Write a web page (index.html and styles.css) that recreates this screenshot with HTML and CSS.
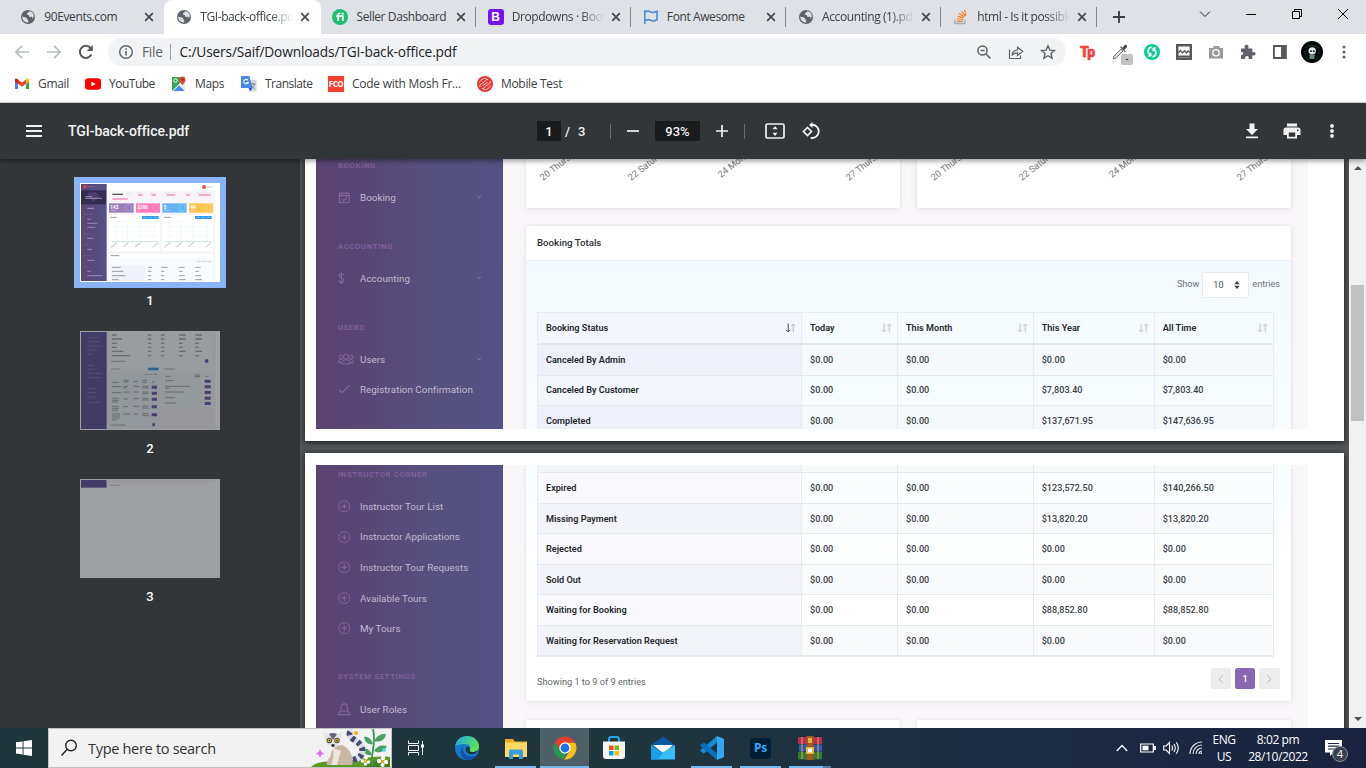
FILE: index.html
```html
<!DOCTYPE html>
<html lang="en">
<head>
<meta charset="utf-8">
<title>TGI-back-office.pdf</title>
<link rel="stylesheet" href="styles.css">
</head>
<body>
<svg class="defs" aria-hidden="true">
  <symbol id="globe" viewBox="0 0 16 16"><circle cx="8" cy="8" r="7" fill="#5f6368"/><path d="M2.200 7.600c1.800.9 3 .5 4.200 1.100.9.5.3 1.500 1.300 2 .8.4.6 1.500.4 2.700-3.300.3-6-2.300-5.900-5.800zM9.300 2.300c-.3 1.500-2.300 1.300-2.400 2.600 0 .9 1.300.6 1.900 1.300.6.8.2 1.700 1.200 1.800 1 .1 1.500-.5 2.300.1.6.5.3 1.300 0 2 1.500-1.300 1.900-3.500 1-5.300-.8-1.400-2.200-2.400-4-2.500z" fill="#dee1e6"/></symbol>
  <symbol id="x" viewBox="0 0 10 10"><path d="M1.200 1.200l7.600 7.600M8.800 1.200L1.200 8.800" stroke="#45494d" stroke-width="1.700"/></symbol>
  <symbol id="plus" viewBox="0 0 14 14"><circle cx="7" cy="7" r="6.200" fill="none" stroke="#8765a5" stroke-width="1.100"/><path d="M7 3.700v6.600M3.700 7h6.600" stroke="#8765a5" stroke-width="1.200"/></symbol>
  <symbol id="chev" viewBox="0 0 6 4"><path d="M.8.8L3 2.800 5.200.8" fill="none" stroke="#8a73ab"/></symbol>
  <symbol id="sort" viewBox="0 0 12 10"><path d="M3.200.5v8.500M1 6.800l2.200 2.200 2.200-2.200M8.200 9.500V1M6 3.200L8.200 1l2.200 2.200" fill="none" stroke="#c3c6ca" stroke-width="1"/></symbol>
</svg>

<header class="tabs">
  <div class="tab"><svg class="fav"><use href="#globe"/></svg><span class="title">90Events.com</span><svg class="close"><use href="#x"/></svg></div>
  <div class="tab active"><svg class="fav"><use href="#globe"/></svg><span class="title fade">TGI-back-office.pdf</span><svg class="close"><use href="#x"/></svg></div>
  <div class="tab sep"><svg class="fav" viewBox="0 0 16 16"><circle cx="8" cy="8" r="8" fill="#1dbf73"/><path d="M6.200 12V6.200c0-1.200.5-1.800 1.700-1.800h.6M4.300 7.200h6.500V12" fill="none" stroke="#fff" stroke-width="1.800"/><circle cx="10.700" cy="4.700" r="1.100" fill="#fff"/></svg><span class="title">Seller Dashboard</span><svg class="close"><use href="#x"/></svg></div>
  <div class="tab sep"><span class="fav boot">B</span><span class="title fade">Dropdowns · Bootstrap</span><svg class="close"><use href="#x"/></svg></div>
  <div class="tab sep"><svg class="fav" viewBox="0 0 16 16"><path d="M1.800 1v14M1.800 3c3-1.500 4.200-1.200 6 0 2 1 3.500.8 6.200-.7v8.500c-2.700 1.500-4.200 1.600-6.200.5-1.800-1-3-1.200-6 .4" fill="none" stroke="#538dd7" stroke-width="1.600"/></svg><span class="title">Font Awesome</span><svg class="close"><use href="#x"/></svg></div>
  <div class="tab sep"><svg class="fav"><use href="#globe"/></svg><span class="title fade">Accounting (1).pdf</span><svg class="close"><use href="#x"/></svg></div>
  <div class="tab sep"><svg class="fav" viewBox="0 0 16 16"><path d="M2 10.500v4h10v-4" fill="none" stroke="#a9abae" stroke-width="1.300"/><path d="M4 12.300h6M4 9.800l6.200.7M4.600 7.200l6 1.700M6 4.500l5.300 3.200M8.400 2.300l3.800 4.800M11.500.8l1.500 5.800" stroke="#f48024" stroke-width="1.200"/></svg><span class="title fade">html - Is it possible</span><svg class="close"><use href="#x"/></svg></div>
  <svg class="newtab" viewBox="0 0 12 12"><path d="M6 0v12M0 6h12" stroke="#3c4043" stroke-width="1.900"/></svg>
  <div class="winctl">
    <svg viewBox="0 0 12 12"><path d="M1 3.500l5 5 5-5" fill="none" stroke="#222"/></svg>
    <svg viewBox="0 0 12 12"><path d="M1 6.500h10" stroke="#000"/></svg>
    <svg viewBox="0 0 12 12"><path d="M1.500 3.500h7v7h-7zM3.500 3.500v-2h7v7h-2" fill="none" stroke="#000"/></svg>
    <svg viewBox="0 0 12 12"><path d="M1 1l10 10M11 1L1 11" stroke="#000"/></svg>
  </div>
</header>

<div class="navbar">
  <div class="navbtns">
    <svg viewBox="0 0 16 16"><path d="M15 8H2M8 1.800L1.800 8 8 14.200" fill="none" stroke="#babcbe" stroke-width="1.700"/></svg>
    <svg viewBox="0 0 16 16"><path d="M1 8h13M8 1.800L14.200 8 8 14.200" fill="none" stroke="#babcbe" stroke-width="1.700"/></svg>
    <svg viewBox="0 0 16 16"><path d="M13.300 10.500A6 6 0 1 1 12.500 4" fill="none" stroke="#55595d" stroke-width="2"/><path d="M14.800 1v6h-6z" fill="#55595d"/></svg>
  </div>
  <div class="omni">
    <svg viewBox="0 0 16 16"><circle cx="8" cy="8" r="6.300" fill="none" stroke="#5f6368" stroke-width="1.400"/><path d="M8 7v4.500M8 4.200v1.600" stroke="#5f6368" stroke-width="1.600"/></svg>
    <span class="scheme">File</span><span class="url">C:/Users/Saif/Downloads/TGI-back-office.pdf</span>
    <div class="omniright">
      <svg viewBox="0 0 16 16"><circle cx="6.500" cy="6.500" r="4.600" fill="none" stroke="#5f6368" stroke-width="1.500"/><path d="M10 10l4.500 4.500M4.500 6.500h4" stroke="#5f6368" stroke-width="1.500"/></svg>
      <svg viewBox="0 0 16 16"><path d="M1.500 5.500v9h11v-3M4 11.500c.3-3.600 2.300-5.300 5.500-5.500V3.200l5.300 4.100-5.300 4.200V8.800C7 8.700 5.300 9.500 4 11.500z" fill="none" stroke="#5f6368" stroke-width="1.200"/></svg>
      <svg viewBox="0 0 16 16"><path d="M8 1.800l1.900 4.300 4.600.4-3.500 3.100 1.100 4.600L8 11.700l-4.100 2.500L5 9.600 1.500 6.500l4.600-.4z" fill="none" stroke="#5f6368" stroke-width="1.400"/></svg>
    </div>
  </div>
  <div class="exts">
    <span class="tp">Tp</span>
    <span class="picker"><svg viewBox="0 0 16 16"><path d="M1 15l1-3 7-7 2 2-7 7z" fill="#ddd" stroke="#777"/><path d="M8 3l5 5 .8-.8-1.500-1.500L15 3.200C15.500 1.500 14.500.5 12.800 1L10.300 3.700 8.800 2.200z" fill="#4b4b4b"/></svg><b>-</b></span>
    <svg viewBox="0 0 16 16"><circle cx="8" cy="8" r="8" fill="#0bcb97"/><path d="M7.500 3.200C4.500 4 3.300 6.500 4.600 9l1.400 1.500M8.500 12.800c3-.8 4.200-3.300 2.900-5.800L10 5.500" fill="none" stroke="#fff" stroke-width="1.800"/><path d="M7.500 8.300v4.200H3.300zM8.500 7.700V3.500h4.200z" fill="#fff"/></svg>
    <svg viewBox="0 0 16 16"><path d="M1.200 1.200h13.600v13.600H1.200z" fill="#fff" stroke="#55585c" stroke-width="2.400"/><path d="M2 9l2.500-2.500L6.500 9l2-2.500L10.500 9l1.500-2 2 1.500" fill="none" stroke="#55585c" stroke-width="1.300"/><path d="M2 12.500h12" stroke="#55585c" stroke-width="2"/></svg>
    <svg viewBox="0 0 16 16"><path d="M1 4h4l1-2h5l1 2h3v10.500H1z" fill="#9a9a9a"/><circle cx="8" cy="8.800" r="3.200" fill="#999" stroke="#fff" stroke-width="1.300"/></svg>
    <svg viewBox="0 0 16 16"><path d="M1 4.500h4C4 1.500 5 .7 6.500.7S9 1.500 8.300 4.500h4v3.800c2.500-.7 3.300.2 3.300 1.500s-1 2.200-3.300 1.500V15H8.700c.5-2-.5-3-1.700-3s-2.300 1-1.700 3H1v-4c3 .6 3.200-3.500 0-3z" fill="#5f6368"/></svg>
    <svg viewBox="0 0 16 16"><path d="M1.900 2h12v12h-12z" fill="#fff" stroke="#55595d" stroke-width="1.900"/><path d="M9 2h5v12H9z" fill="#55595d"/></svg>
    <svg class="avatar" viewBox="0 0 22 22"><circle cx="11" cy="11" r="11" fill="#050708"/><path d="M4 7q7-5 14 0" fill="none" stroke="#38666f" stroke-dasharray="1 1"/><path d="M4 10v4M18 10v4M5 16l3 2M17 16l-3 2" stroke="#31545c" stroke-dasharray="1 1"/><ellipse cx="11.200" cy="9.800" rx="3.700" ry="3.500" fill="#e6e9e9"/><path d="M8 14q3-2 6 0l-1 4H9z" fill="#6c8087"/><circle cx="10" cy="10.200" r=".9"/><circle cx="12.800" cy="10.200" r=".9"/></svg>
    <svg viewBox="0 0 16 16"><g fill="#5f6368"><circle cx="8" cy="3" r="1.500"/><circle cx="8" cy="8" r="1.500"/><circle cx="8" cy="13" r="1.500"/></g></svg>
  </div>
</div>

<nav class="bookmarks">
  <a class="bk w1"><svg viewBox="0 0 16 16"><path d="M1 4v9h3V7z" fill="#4285f4"/><path d="M12 7v6h3V4z" fill="#34a853"/><path d="M12 3.500V8l3-2.200V3.500C15 2 13 2 12 3.500z" fill="#fbbc04"/><path d="M4 3.500v4.300l4 3 4-3V3.500L8 6.500z" fill="#ea4335"/><path d="M1 3.500v2.300L4 8V3.500C3 2 1 2 1 3.500z" fill="#c5221f"/></svg><span>Gmail</span></a>
  <a class="bk w2"><svg viewBox="0 0 16 16"><rect y="2.300" width="16" height="11.400" rx="3" fill="#f00"/><path d="M6.400 5.500v5l4.200-2.500z" fill="#fff"/></svg><span>YouTube</span></a>
  <a class="bk w3"><svg viewBox="0 0 16 16"><path d="M1 1h13v14H1z" fill="#34a853"/><path d="M1 15L13 3l1 1v11z" fill="#e8eaed"/><path d="M2.500 15L8 9.500l5.500 5.500z" fill="#4285f4"/><circle cx="4.500" cy="4.500" r="1.700" fill="none" stroke="#fff"/><path d="M11.500 9.500C10 7 8.500 6 8.500 3.500a3 3 0 0 1 6 0c0 2.500-1.500 3.500-3 6z" fill="#ea4335"/><circle cx="11.500" cy="3.500" r="1.100" fill="#8b211b"/></svg><span>Maps</span></a>
  <a class="bk w4"><svg viewBox="0 0 16 16"><path d="M6 4h9.500v11.500H9z" fill="#d4d7da"/><path d="M9.500 8h5M12 6.800V8M10 12.500c2-1 3-2.500 3.200-4.500M10.500 9.500c.7 1.500 1.800 2.500 3.200 3.200" fill="none" stroke="#7e8a92"/><path d="M0 0h8.500l3 12H0z" fill="#4a86ed"/><path d="M7 4.300A2.300 2.300 0 1 0 7.300 6.500H5" fill="none" stroke="#fff" stroke-width="1.100"/><path d="M7.500 12h4L9 15.500z" fill="#2d5fca"/></svg><span>Translate</span></a>
  <a class="bk w5"><b class="fco">FCO</b><span>Code with Mosh Fr...</span></a>
  <a class="bk"><svg viewBox="0 0 16 16"><circle cx="8" cy="8" r="8" fill="#e23a36"/><path d="M2.500 6.500C4 3 7 2 9.500 2.500M3 11c-1-4 4-3.500 5-6 .5-1 1.500-1.500 3-1.500M13.500 9.500C12 13 9 14 6.500 13.500M13 5c1 4-4 3.500-5 6-.5 1-1.500 1.500-3 1.500M5.500 9.500l5-3" fill="none" stroke="#ffd9d5" stroke-width="1"/></svg><span>Mobile Test</span></a>
</nav>

<div class="pdfbar">
  <svg class="burger" viewBox="0 0 16 12"><path d="M0 1h16M0 6h16M0 11h16" stroke="#f1f1f1" stroke-width="2"/></svg>
  <span class="docname">TGI-back-office.pdf</span>
  <div class="pdfmid">
    <span class="pageno">1</span><span class="slash">/</span><span class="total">3</span>
    <i class="vsep"></i>
    <svg class="op minus" viewBox="0 0 12 12"><path d="M0 6h12" stroke="#f1f1f1" stroke-width="1.700"/></svg>
    <span class="zoomval">93%</span>
    <svg class="op" viewBox="0 0 12 12"><path d="M0 6h12M6 0v12" stroke="#f1f1f1" stroke-width="1.700"/></svg>
    <i class="vsep s2"></i>
    <svg class="fit" viewBox="0 0 20 16"><rect x="1" y="1" width="18" height="14" rx="1.500" fill="none" stroke="#f1f1f1" stroke-width="1.700"/><path d="M10 3l2.500 3.200h-5zM10 13l2.500-3.200h-5z" fill="#f1f1f1"/></svg>
    <svg class="rot" viewBox="0 0 18 18"><path d="M9.500 2.800a6.600 6.600 0 1 1-.8 13" fill="none" stroke="#f1f1f1" stroke-width="1.800"/><path d="M10.500 0v6L7 3z" fill="#f1f1f1"/><path d="M5.500 5.500l4 4-4 4-4-4z" fill="none" stroke="#f1f1f1" stroke-width="1.700"/></svg>
  </div>
  <div class="pdfright">
    <svg viewBox="0 0 18 18"><path d="M6.500 1.500h5V7H15l-6 6-6-6h3.500zM3 14.500h12v1.800H3z" fill="#f1f1f1"/></svg>
    <svg viewBox="0 0 18 18"><path d="M4 1.500h10v3H4zM3 5.500h12q2.500 0 2.500 2.500v5H14v3.500H4V13H.5V8Q.5 5.500 3 5.500zM5.800 10.500v4.200h6.400v-4.200zM14 7.500v1.500h1.500V7.500z" fill="#f1f1f1" fill-rule="evenodd"/></svg>
    <svg viewBox="0 0 18 18"><g fill="#f1f1f1"><circle cx="9" cy="4" r="1.900"/><circle cx="9" cy="9" r="1.900"/><circle cx="9" cy="14" r="1.900"/></g></svg>
  </div>
</div>

<main class="viewer">
  <aside class="thumbs">
    <div class="thumb current">
      <svg viewBox="0 0 420 297"><defs><linearGradient id="side"><stop stop-color="#5b4575"/><stop offset="1" stop-color="#545187"/></linearGradient></defs>
        <path d="M0 0h420v297H0z" fill="#fff"/><path d="M80 22h326v272H80z" fill="#f8f5f9"/><path d="M3 3h77v291H3z" fill="url(#side)"/><path d="M3 22h75v42H3z" fill="#332b52"/><path d="M20 32l26-6 14 14-20 16z" fill="#4c3d70"/>
        <circle cx="15" cy="11" r="5" fill="#e2474d"/><path d="M23 11h20" stroke="#7d6c99" stroke-width="3"/><circle cx="372" cy="12" r="6" fill="#e94f44"/><path d="M380 12h18" stroke="#ccc" stroke-width="3"/>
        <g class="ink"><path d="M16 41h20M16 46h50M22 76h20" stroke="#c3bbd2" stroke-width="3"/><g stroke="#b1a6c9" stroke-width="3"><path d="M22 109h10M22 121h30M22 133h24M22 166h18M22 199h14M22 232h22M22 265h10M22 278h46"/></g>
        <g stroke="#8767a2" stroke-width="2"><path d="M12 94h28M12 152h20M12 185h17M12 218h22M12 252h12"/></g></g>
        <path d="M97 34h32" stroke="#555" stroke-width="4"/><g class="ink" stroke="#f06cab" stroke-width="4"><path d="M97 48h46M174 36h14M214 36h14M260 36h26M318 36h12M356 36h36"/></g><path d="M140 31h16M170 30h20M210 30h20M252 30h40M312 30h24M352 30h42" stroke="#e2e0e4" stroke-width="2"/>
        <path d="M87 61h74v28H87z" fill="#9a7dbb"/><path d="M168 61h72v28h-72z" fill="#ff78b7"/><path d="M247 61h73v28h-73z" fill="#64b5f6"/><path d="M327 61h72v28h-72z" fill="#ffc552"/>
        <g class="nums"><text x="91" y="77">143</text><text x="172" y="77">$290</text><text x="251" y="77">5</text><text x="331" y="77">49</text></g>
        <path d="M93 82h14M173 82h12M252 82h20M332 82h12" stroke="#fff" stroke-opacity=".5" stroke-width="2"/><g fill="none" stroke="#fff" stroke-opacity=".2" stroke-width="3"><circle cx="146" cy="74" r="10"/><circle cx="228" cy="74" r="10"/><circle cx="306" cy="74" r="10"/><circle cx="386" cy="74" r="10"/></g>
        <path d="M87 96h153v108H87zM247 96h152v108H247zM87 213h312v81H87z" fill="#fff"/><path d="M91 103h19M252 103h20M92 218h26" stroke="#999" stroke-width="3"/><path d="M186 99h50v9h-50zM345 99h50v9h-50z" fill="#2f9cf4"/><path d="M191 103.500h40M350 103.500h40" stroke="#8cc8fa" stroke-width="2" stroke-dasharray="9 7"/>
        <g fill="none" stroke="#e0e9e9"><path d="M96 115h136M96 130h136M96 145h136M96 160h136M109 115v60M143 115v60M180 115v60M222 115v60M255 115h136M255 130h136M255 145h136M255 160h136M269 115v60M303 115v60M339 115v60M382 115v60"/></g>
        <path d="M96 176h138M255 176h138" stroke="#cbe4dc" stroke-width="3"/><g stroke="#b9bdbc" stroke-width="3"><path d="M93 193l18-14M129 192l16-13M165 191l16-12M218 193l16-14M253 193l18-14M289 192l16-13M325 191l16-12M377 193l16-14"/></g>
        <path d="M87 225h312v69H87z" fill="#f5fbfe"/><path d="M91 248h106v46H91z" fill="#f0f3fb"/><path d="M352 235h44" stroke="#b5babd" stroke-width="2" stroke-dasharray="11 4"/>
        <g class="ink" stroke="#777" stroke-width="3"><path d="M96 253h26M204 253h12M243 253h20M297 253h17M346 253h16M96 265h34M204 265h10M243 265h10M297 265h11M346 265h11M96 278h40M204 278h10M243 278h10M297 278h17M346 278h17M96 290h20M204 290h10M243 290h10M297 290h20M346 290h20"/></g>
      </svg>
    </div>
    <span class="tn">1</span>
    <div class="thumb dim">
      <svg viewBox="0 0 420 297"><path d="M0 0h420v297H0z" fill="#fff"/><path d="M80 3h326v291H80z" fill="#f3f0f7"/><path d="M3 3h77v291H3z" fill="#52418f"/><path d="M87 3h312v127H87z" fill="#f7fbfc"/>
        <g class="ink" stroke="#8b7db5" stroke-width="3"><path d="M22 20h34M22 32h38M22 45h42M22 57h28M22 70h18M22 103h20M22 115h22M22 127h42M22 140h38M22 173h24M22 185h26M22 198h28M22 214h40"/></g>
        <g class="ink" stroke="#777" stroke-width="4"><path d="M96 12h14M204 12h10M243 12h10M297 12h20M346 12h20M96 24h30M204 24h10M243 24h10M297 24h20M346 24h20M96 37h15M204 37h10M243 37h10M297 37h11M346 37h11M96 49h14M204 49h10M243 49h10M297 49h11M346 49h11M96 61h34M204 61h10M243 61h10M297 61h20M346 61h20M96 74h54M204 74h10M243 74h10M297 74h11M346 74h11"/></g><path class="ink" d="M93 91h43M93 114h26M252 114h32" stroke="#888" stroke-width="3"/><rect x="375" y="85" width="10" height="10" fill="#6c3fa5"/>
        <path d="M87 121h153v170H87z" fill="#eaf3f6"/><path d="M247 121h152v112H247z" fill="#f1f6f9"/><path d="M204 110h32v8h-32z" fill="#238fe0"/>
        <g class="ink" stroke="#777" stroke-width="3"><path d="M194 130h42" stroke-dasharray="10 4"/><path d="M96 154h20M130 148h16M130 153h16M160 151h14M187 148h14M187 154h14M216 153h8M96 167h28M130 166h14M130 171h10M160 166h18M187 166h20M187 171h18M96 185h28M130 183h20M160 183h16M187 183h18M187 188h18M96 202h20M96 208h20M96 213h18M130 204h14M160 203h16M187 202h18M187 207h20M96 226h20M96 232h20M96 238h18M130 227h14M160 226h18M187 225h18M187 231h20M96 249h24M96 255h24M96 261h22M96 267h14M130 249h20M160 249h14M187 248h18M187 254h20M92 282h44"/><path d="M255 136h18M344 132h16M344 137h16M376 136h10M255 149h26M255 166h75M255 172h14M255 183h56M255 200h30M255 216h32"/></g>
        <g fill="#6a409f"><path d="M215 164h16v9h-16zM215 182h16v9h-16zM215 200h16v9h-16zM215 223h16v9h-16zM215 247h16v9h-16zM217 277h8v9h-8zM374 146h18v9h-18zM374 163h18v9h-18zM374 180h18v9h-18zM374 197h18v9h-18zM374 213h18v9h-18z"/></g>
      </svg>
    </div>
    <span class="tn">2</span>
    <div class="thumb dim"><svg viewBox="0 0 420 297"><path d="M0 0h420v297H0z" fill="#fff"/><path d="M3 3h77v23H3z" fill="#52418f"/><path d="M80 3h326v8H80z" fill="#f8f5f9"/><path d="M88 19h30" stroke="#bbb" stroke-width="3"/></svg></div>
    <span class="tn">3</span>
  </aside>

  <section class="pages">
    <article class="page p1">
      <div class="sheet">
        <div class="menu">
          <h6>BOOKING</h6>
          <a><svg viewBox="0 0 14 14"><path d="M1.500 2.500h11v10.500h-11zM1.500 5.200h11M4 1v2.500M10 1v2.500M4.500 9l1.800 1.800L10 7.500" fill="none" stroke="#8765a5" stroke-width="1.200"/></svg>Booking<svg class="chev"><use href="#chev"/></svg></a>
          <h6>ACCOUNTING</h6>
          <a><svg viewBox="0 0 14 14"><path d="M6.300 4C6.300 2.500 5.200 2 3.700 2S1.200 2.800 1.200 4.300c0 3.200 5.300 1.800 5.300 5C6.500 11 5.200 11.800 3.800 11.800 2 11.800 1 11 1 9.400M3.800.5v13" fill="none" stroke="#8765a5" stroke-width="1.200"/></svg>Accounting<svg class="chev"><use href="#chev"/></svg></a>
          <h6>USERS</h6>
          <a><svg class="wide" viewBox="0 0 16 12"><g fill="none" stroke="#8765a5"><circle cx="8" cy="3.800" r="2.500"/><circle cx="3.500" cy="4" r="2"/><circle cx="12.500" cy="4" r="2"/><path d="M3.800 10.800c0-3 1.500-4 4.200-4s4.200 1 4.200 4zM3.800 9.500H.6c0-2.300.8-3 3.500-3.200M12.200 9.500h3.200c0-2.300-.8-3-3.500-3.200"/></g></svg>Users<svg class="chev"><use href="#chev"/></svg></a>
          <a><svg viewBox="0 0 14 14"><path d="M1 7.500l3.500 3.300L13 2.500" fill="none" stroke="#8765a5" stroke-width="1.200"/></svg>Registration Confirmation</a>
        </div>
        <div class="board">
          <div class="charts">
            <div class="card chart"><svg viewBox="0 0 374 50"><text transform="translate(17 22) rotate(-38)">20 Thursday</text><text transform="translate(105 22) rotate(-38)">22 Saturday</text><text transform="translate(195 19) rotate(-38)">24 Monday</text><text transform="translate(323 22) rotate(-38)">27 Thursday</text></svg></div>
            <div class="card chart"><svg viewBox="0 0 374 50"><text transform="translate(17 22) rotate(-38)">20 Thursday</text><text transform="translate(105 22) rotate(-38)">22 Saturday</text><text transform="translate(195 19) rotate(-38)">24 Monday</text><text transform="translate(323 22) rotate(-38)">27 Thursday</text></svg></div>
          </div>
          <div class="card totals">
            <h5>Booking Totals</h5>
            <div class="cbody">
              <div class="show"><span>Show</span><span class="select">10<svg viewBox="0 0 6 8"><path d="M3 0l2.800 3.300H.2zM3 8L.2 4.700h5.600z" fill="#3d4348"/></svg></span><span>entries</span></div>
              <div class="table">
                <div class="row head"><b>Booking Status<svg class="on" viewBox="0 0 12 10"><path d="M3.200.5v8.500M1 6.800l2.200 2.200 2.200-2.200" fill="none" stroke="#454a55"/><path d="M8.200 9.500V1M6 3.200L8.200 1l2.200 2.200" fill="none" stroke="#b9bcc5"/></svg></b><b>Today<svg><use href="#sort"/></svg></b><b>This Month<svg><use href="#sort"/></svg></b><b>This Year<svg><use href="#sort"/></svg></b><b>All Time<svg><use href="#sort"/></svg></b></div>
                <div class="row odd"><b>Canceled By Admin</b><span>$0.00</span><span>$0.00</span><span>$0.00</span><span>$0.00</span></div>
                <div class="row"><b>Canceled By Customer</b><span>$0.00</span><span>$0.00</span><span>$7,803.40</span><span>$7,803.40</span></div>
                <div class="row odd"><b>Completed</b><span>$0.00</span><span>$0.00</span><span>$137,671.95</span><span>$147,636.95</span></div>
              </div>
            </div>
          </div>
        </div>
      </div>
    </article>

    <article class="page p2">
      <div class="sheet">
        <div class="menu">
          <h6>INSTRUCTOR CORNER</h6>
          <a><svg><use href="#plus"/></svg>Instructor Tour List</a>
          <a><svg><use href="#plus"/></svg>Instructor Applications</a>
          <a><svg><use href="#plus"/></svg>Instructor Tour Requests</a>
          <a><svg><use href="#plus"/></svg>Available Tours</a>
          <a><svg><use href="#plus"/></svg>My Tours</a>
          <h6>SYSTEM SETTINGS</h6>
          <a><svg viewBox="0 0 14 14"><path d="M4.500 8.500C2 6.500 3 1 7 1s5 5.500 2.500 7.500C12 9 13 10 13.300 13H.7C1 10 2 9 4.500 8.500zM4.500 8.500q2.500 1.800 5 0" fill="none" stroke="#8765a5" stroke-width="1.200"/></svg>User Roles</a>
        </div>
        <div class="board">
          <div class="card totals">
            <div class="table">
              <div class="row odd stub"><b></b><span></span><span></span><span></span><span></span></div>
              <div class="row"><b>Expired</b><span>$0.00</span><span>$0.00</span><span>$123,572.50</span><span>$140,266.50</span></div>
              <div class="row odd"><b>Missing Payment</b><span>$0.00</span><span>$0.00</span><span>$13,820.20</span><span>$13,820.20</span></div>
              <div class="row"><b>Rejected</b><span>$0.00</span><span>$0.00</span><span>$0.00</span><span>$0.00</span></div>
              <div class="row odd"><b>Sold Out</b><span>$0.00</span><span>$0.00</span><span>$0.00</span><span>$0.00</span></div>
              <div class="row"><b>Waiting for Booking</b><span>$0.00</span><span>$0.00</span><span>$88,852.80</span><span>$88,852.80</span></div>
              <div class="row odd"><b>Waiting for Reservation Request</b><span>$0.00</span><span>$0.00</span><span>$0.00</span><span>$0.00</span></div>
            </div>
            <div class="foot"><span>Showing 1 to 9 of 9 entries</span><div class="pager"><i><svg viewBox="0 0 6 10"><path d="M5 1L1 5l4 4" fill="none" stroke="#bcbcbc"/></svg></i><i class="sel">1</i><i><svg viewBox="0 0 6 10"><path d="M1 1l4 4-4 4" fill="none" stroke="#bcbcbc"/></svg></i></div></div>
          </div>
          <div class="charts next"><div class="card"></div><div class="card"></div></div>
        </div>
      </div>
    </article>
  </section>

  <div class="scroll"><svg viewBox="0 0 8 4"><path d="M4 0l4 4H0z" fill="#505050"/></svg><i></i><svg class="dn" viewBox="0 0 8 4"><path d="M4 4l4-4H0z" fill="#505050"/></svg></div>
</main>

<footer class="taskbar">
  <div class="start"><svg viewBox="0 0 16 16"><path d="M0 2.300l6.600-.9v6H0zM7.500 1.200L16 0v7.400H7.500zM0 8.400h6.600v6.100L0 13.600zM7.500 8.400H16V16l-8.500-1.200z" fill="#fff"/></svg></div>
  <div class="search">
    <svg class="mag" viewBox="0 0 18 18"><circle cx="11" cy="6.500" r="5.300" fill="none" stroke="#222" stroke-width="1.400"/><path d="M7 10.500L1.500 16.500" stroke="#222" stroke-width="1.400"/></svg>
    <span>Type here to search</span>
    <svg class="lemur" viewBox="0 0 80 38"><path d="M0 38c5-6 20-6 32-6 18-1 28-6 47-4v10z" fill="#5d9a25"/><path d="M53 38c5-6 15-7 26-7v7z" fill="#43801c"/>
      <path d="M62 37C58 25 66 18 62 0" fill="none" stroke="#3c9555" stroke-width="1.800"/><path d="M63 12c4-7 8-7 12-7-1 6-6 9-12 7zM62 15c-2-6-6-8-9-7 1 5 4 8 9 7zM63 22c4-6 8-6 13-5-3 6-8 8-13 5zM61 26c-2-6-6-7-9-6 1 5 4 7 9 6z" fill="#48a162"/>
      <path d="M42 31C57 27 52 15 42 10 37 7 38 3 41 1" fill="none" stroke="#dcdce5" stroke-width="6"/><path d="M42 31C57 27 52 15 42 10 37 7 38 3 41 1" fill="none" stroke="#424b72" stroke-width="6" stroke-dasharray="3.500 3.500"/>
      <path d="M16 36c-1-5 3-6 4-11 1-6 6-9 11-9 8 3 12 12 10 20z" fill="#c9b8a5"/><path d="M22 19c1 8 0 12-2 17h6l4-14z" fill="#efe6dc"/>
      <path d="M12 3l5 2q6-2 10 0l5-3-2 8q-1 6-8 9-8-3-8-9z" fill="#e6e5e4"/><path d="M18 5q4-2 8 0l-4 6z" fill="#626677"/><circle cx="18.300" cy="11.500" r="2.700" fill="#454858"/><circle cx="26" cy="11.500" r="2.700" fill="#454858"/><circle cx="18.300" cy="11.500" r="1.800" fill="#f7cb16"/><circle cx="26" cy="11.500" r="1.800" fill="#f7cb16"/><circle cx="18.300" cy="11.500" r=".8"/><circle cx="26" cy="11.500" r=".8"/><ellipse cx="22" cy="16.500" rx="1.800" ry="1.400" fill="#333646"/>
      <path d="M9 20l1.300 3 3 1.500-3 1.500L9 29l-1.300-3-3-1.500 3-1.500z" fill="#dc72ed"/><circle cx="45" cy="4" r="2" fill="#f9ac1d"/><circle cx="73" cy="21" r="2" fill="#55d4e6"/><g fill="#fff"><circle cx="55" cy="29" r="1.800"/><circle cx="51.500" cy="32" r="1.800"/><circle cx="57.500" cy="33" r="1.800"/><circle cx="54.500" cy="35" r="1.800"/><circle cx="72" cy="29" r="2.200"/><circle cx="68" cy="32" r="2.200"/><circle cx="75" cy="33" r="2.200"/><circle cx="71.500" cy="36" r="2"/></g><circle cx="54.500" cy="32" r="1.400" fill="#f9b61a"/><circle cx="71.500" cy="32.500" r="1.600" fill="#f9b61a"/></svg>
  </div>
  <div class="apps">
    <div class="app tv"><svg viewBox="0 0 16 16" class="s16"><path d="M.5.500v3h10v-3M.5 15.500v-3h10v3M.5 5.500h10v5H.5z" fill="none" stroke="#fff"/><path d="M14.500 1v14" stroke="#fff"/><path d="M13 4.500h3v3h-3z" fill="#fff"/></svg></div>
    <div class="app"><svg viewBox="0 0 24 24"><defs><linearGradient id="eg" x1="0" y1="0" x2="1" y2=".5"><stop stop-color="#1fa9e8"/><stop offset="1" stop-color="#61df55"/></linearGradient></defs><circle cx="12" cy="12" r="12" fill="#147bcd"/><path d="M.3 10C1 4 6 0 12 0c7 0 12 5 12 10 0 4-3 6-6.500 6-3 0-3.500-1.500-2.500-3 .8-1.500-.5-5-4.500-5C5 8 1 9 .3 10z" fill="url(#eg)"/><path d="M8 10.500c-1.500 6 3 9.500 7.500 10 2.500.3 5-.5 7-2-2 3.500-5.500 5.500-10 5.500C6 23.500 3.500 15 8 10.500z" fill="#164fa4"/><path d="M15 13c-1 1.500-.5 3 2.500 3 2 0 4-.6 5.300-2-.5 3-4 5-8 4-4-.8-5-5-3.300-7 2-1 4 .5 3.500 2z" fill="#1f353e"/></svg></div>
    <div class="app run"><svg viewBox="0 0 24 24"><path d="M1 3h8l2 2.500h12V21H1z" fill="#e9a91f"/><path d="M1 6.500h22V21H1z" fill="#ffd866"/><path d="M5 23v-8q0-1.500 1.500-1.500h11Q19 13.500 19 15v8h-4v-4.500H9V23z" fill="#3d9be0"/></svg></div>
    <div class="app run cur"><svg viewBox="0 0 24 24"><path d="M12 6.500h10a11.500 11.500 0 0 1-11 17l6-8.500z" fill="#fbc116"/><path d="M2 6.200l5 8.800 5 3-1.500 5.400A11.500 11.500 0 0 1 2 6.200z" fill="#229a4b"/><path d="M2 6.200A11.500 11.500 0 0 1 22 6.500H12l-5 8z" fill="#e53e30"/><circle cx="12" cy="12" r="5.700" fill="#fff"/><circle cx="12" cy="12" r="4.400" fill="#1a73e8"/></svg></div>
    <div class="app"><svg viewBox="0 0 24 24"><path d="M7 6V3q0-2 2-2h6q2 0 2 2v3" fill="none" stroke="#27a4ea" stroke-width="2"/><path d="M1 5.500h22V20q0 3-3 3H4q-3 0-3-3z" fill="#f5f5f5"/><path d="M7 9.500h4.500V14H7z" fill="#f25022"/><path d="M12.500 9.500H17V14h-4.500z" fill="#7fba00"/><path d="M7 15h4.500v4.500H7z" fill="#00a4ef"/><path d="M12.500 15H17v4.500h-4.500z" fill="#ffb900"/></svg></div>
    <div class="app"><svg viewBox="0 0 24 24"><path d="M0 9L12 .8 24 9v2H0z" fill="#0c59a4"/><path d="M2 9h20l-9 9z" fill="#f4f8fb"/><path d="M0 9l14 14H0z" fill="#1a9ce8"/><path d="M0 23.500L24 9v14.500z" fill="#36bdf6"/><path d="M0 9l12 7.500L7 23.500H0z" fill="#1a9ce8"/></svg></div>
    <div class="app run"><svg viewBox="0 0 24 24"><path d="M17 0l7 3v18l-7 3z" fill="#31a7f0"/><path d="M17 0v6.500L4 17.500 1 15.500 0 14.500z" fill="#168bd5"/><path d="M17 24v-6.500L4 6.500 1 8.500l-1 1z" fill="#0873bc"/></svg></div>
    <div class="app run"><b class="ps">Ps</b></div>
    <div class="app run rar"><svg viewBox="0 0 24 24"><path d="M0 1h24v7H0z" fill="#b62d58"/><path d="M1 8.500h23v7H1z" fill="#2d5cad"/><path d="M0 16h24v7.500H0z" fill="#327b35"/><path d="M4 1v22M20 1v22" stroke="#d8a94c" stroke-width="1"/><path d="M8.500 0h7v24h-7z" fill="#a05a20"/><path d="M10 2h4v5h-4zM8 11h8v7H8z" fill="#e9b337"/><path d="M10 12.500h4v4h-4z" fill="#fff"/></svg></div>
  </div>
  <div class="tray">
    <svg class="t1" viewBox="0 0 12 8"><path d="M.8 7L6 1.500 11.200 7" fill="none" stroke="#fff" stroke-width="1.300"/></svg>
    <svg class="t2" viewBox="0 0 16 10"><path d="M.7 1h12.600v8H.7zM14 3.500h1.300v3H14z" fill="none" stroke="#fff" stroke-width="1.200"/><path d="M2.500 2.700h6v4.600h-6z" fill="#fff"/></svg>
    <svg class="t3" viewBox="0 0 17 14"><path d="M.7 5v4h2.500L6.500 12.500v-11L3.200 5zM8.800 4.500q1.500 2.500 0 5M11 3q2.500 4 0 8M13.300 1.200q4 5.800 0 11.600" fill="none" stroke="#fff" stroke-width="1.100"/></svg>
    <svg class="t4" viewBox="0 0 14 14"><path d="M1 13A12 12 0 0 1 13 1M4 13a9 9 0 0 1 9-9M7 13a6 6 0 0 1 6-6M10 13a3 3 0 0 1 3-3" fill="none" stroke="#dde3e8" stroke-width="1.200"/><path d="M11.500 11.500H13V13h-1.500z" fill="#fff"/></svg>
    <div class="lang"><span>ENG</span><span>US</span></div>
    <div class="clock"><span>8:02 pm</span><span>28/10/2022</span></div>
    <div class="notif"><svg viewBox="0 0 17 16"><path d="M0 0h17v12.500H8.500L5 16v-3.500H0z" fill="#fff"/><path d="M3 3.500h11M3 6.200h11M3 9h7" stroke="#1b2a40" stroke-width="1.200"/></svg><b>4</b></div>
  </div>
</footer>
</body>
</html>
```
FILE: styles.css
```css
* { box-sizing: border-box; }
body { margin: 0; width: 1366px; height: 768px; overflow: hidden; display: flex; flex-direction: column; font-family: "Open Sans", "Noto Sans", sans-serif; font-size: 12px; color: #3c4043; background: #fff; }
svg { display: block; flex: none; }
.defs { position: absolute; width: 0; height: 0; }

/* browser tabs */
.tabs { height: 34px; flex: none; background: #dee1e6; display: flex; padding-left: 8.500px; align-items: stretch; }
.tab { width: 155.200px; flex: none; display: flex; align-items: center; padding: 0 10px 0 11.800px; position: relative; }
.tab.active { background: #fff; border-radius: 8px 8px 0 0; width: 157px; padding-left: 12.500px; }
.tab.sep::after { content: ""; position: absolute; right: 0; top: 7px; width: 1px; height: 20px; background: #85888d; }
.fav { width: 16px; height: 16px; margin-right: 8px; flex: none; }
.title { width: 93px; overflow: hidden; white-space: nowrap; letter-spacing: -.4px; line-height: 18px; }
.fade { -webkit-mask-image: linear-gradient(90deg, #000 75%, transparent); mask-image: linear-gradient(90deg, #000 75%, transparent); }
.close { width: 10px; height: 10px; margin-left: 7px; }
.boot { background: #7414f5; color: #fff; border-radius: 3px; font: bold 12px/16px "Liberation Sans", sans-serif; text-align: center; }
.newtab { width: 12px; height: 12px; margin: 11px 0 0 16px; }
.winctl { display: flex; margin-left: auto; gap: 34px; padding: 8px 17px 0 0; }
.winctl svg { width: 12px; height: 12px; }

/* address row */
.navbar { height: 35px; flex: none; display: flex; align-items: center; padding-top: 1px; }
.navbtns { width: 108px; display: flex; gap: 16px; padding-left: 14px; }
.navbtns svg { width: 16px; height: 16px; }
.omni { width: 958px; height: 28px; border-radius: 14px; background: #f1f3f4; display: flex; align-items: center; padding: 0 10px; font-size: 13.700px; }
.omni svg { width: 16px; height: 16px; }
.scheme { color: #5f6368; margin-left: 8px; width: 28.500px; border-right: 1px solid #9a9da1; line-height: 16px; letter-spacing: -.2px; white-space: nowrap; }
.url { color: #202124; margin-left: 9px; margin-top: -1px; letter-spacing: -.14px; white-space: nowrap; }
.omniright { margin-left: auto; display: flex; gap: 16px; }
.exts { display: flex; align-items: center; gap: 16px; padding-left: 14px; }
.exts svg { width: 16px; height: 16px; }
.exts .avatar { width: 22px; height: 22px; margin: 0 -3px; }
.tp { width: 16px; color: #f0423c; font: 900 14px/16px Roboto, sans-serif; letter-spacing: -1px; -webkit-text-stroke: .5px #f0423c; }
.picker { position: relative; }
.picker b { position: absolute; left: 9px; top: 10px; width: 12px; height: 11px; background: #c2c2c2; border-radius: 2px; font-size: 8px; line-height: 9px; text-align: center; }
.bookmarks { height: 34px; flex: none; display: flex; padding: 7px 0 0 14px; border-bottom: 1px solid #d6d6d8; }
.bk { display: flex; gap: 8px; height: 16px; align-items: center; white-space: nowrap; letter-spacing: -.32px; }
.bk span { margin-top: -1px; }
.bk svg { width: 16px; height: 16px; }
.w1 { width: 71px; } .w2 { width: 86px; } .w3 { width: 70px; } .w4 { width: 87px; } .w5 { width: 149px; }
.w2, .w4 { letter-spacing: -.5px; }
.w5 { letter-spacing: -.25px; }
.fco { width: 16px; height: 16px; background: #f43f30; color: #fff; font: bold 8px/16px "Open Sans", sans-serif; letter-spacing: -.4px; text-align: center; }

/* document toolbar */
.pdfbar { height: 56px; flex: none; background: #323639; display: flex; align-items: center; color: #f1f1f1; font-family: Roboto, sans-serif; z-index: 2; box-shadow: 0 2px 5px rgba(0,0,0,.4); }
.burger { width: 16px; height: 12px; margin-left: 26px; }
.docname { font-size: 14px; font-weight: 500; width: 469px; padding-left: 26px; letter-spacing: -.05px; }
.pdfmid { display: flex; align-items: center; font-size: 13px; font-weight: 500; margin-left: 26px; width: 300px; }
.pageno { width: 24px; height: 20px; line-height: 21px; background: #191b1c; text-align: center; }
.slash { margin-left: 4px; width: 13px; } .total { width: 8px; margin-right: 1px; }
.vsep { width: 1px; height: 15px; background: #6a6d6f; margin: 0 16px 0 23px; }
.op { width: 12px; height: 12px; }
.zoomval { width: 45px; height: 20px; line-height: 21px; background: #191b1c; text-align: center; margin: 0 16px; }
.vsep.s2 { margin: 0 20px 0 16px; }
.fit { width: 20px; height: 16px; } .rot { width: 18px; height: 18px; margin-left: 17px; }
.pdfright { margin-left: auto; display: flex; gap: 22px; padding-right: 25px; }
.pdfright svg { width: 18px; height: 18px; }

.viewer { height: 569px; flex: none; display: flex; overflow: hidden; background: #525659; }
.thumbs { width: 300px; background: #323639; padding-top: 18px; display: flex; flex-direction: column; align-items: center; flex: none; }
.thumb svg { width: 140px; height: 99px; }
.ink { opacity: .7; }
.nums text { font: 700 14px Roboto, sans-serif; fill: #fff; }
.current { border: 6px solid #8ab4f8; }
.dim { opacity: .52; }
.tn { font: 500 13px/16px Roboto, sans-serif; color: #fff; margin: 5px 0 22px; }
.dim + .tn { margin: 11px 0 22px; }

/* pdf pages */
.pages { width: 1049px; padding-left: 5px; flex: none; }
.page { width: 1039px; background: #fff; padding-left: 11px; box-shadow: 0 1px 6px rgba(0,0,0,.75); }
.p1 { height: 282px; } .p2 { height: 300px; margin-top: 12px; padding-top: 12px; }
.sheet { width: 992px; height: 270px; overflow: hidden; display: flex; background: #f9f7fa; font-family: Roboto, sans-serif; }
.p2 .sheet { height: 288px; }
.menu { width: 187px; flex: none; background: linear-gradient(90deg, #5b4473, #584777 28%, #56507f 60%, #545185); padding-left: 22px; }
.menu h6 { margin: 28px 0 9px; height: 14px; font-size: 7.700px; line-height: 14px; font-weight: 500; letter-spacing: .68px; color: #8563a3; }
.menu h6:first-child { margin-top: 0; }
.menu a { height: 30px; display: flex; align-items: center; font-size: 9.800px; color: #c1b8d0; white-space: nowrap; width: 149px; letter-spacing: .04px; }
.menu a + a { height: 31px; }
.menu a svg { width: 12.500px; height: 12.500px; margin-right: 9.500px; }
.menu a .wide { width: 16px; height: 12px; margin-right: 6px; }
.menu a .chev { width: 6px; height: 4px; margin: 0 5px 0 auto; }
.p2 .menu { padding-top: 3px; }
.p2 .menu h6 { margin: 26.500px 0 9.500px; } .p2 .menu h6:first-child { margin: 0 0 9px; }
.p2 .menu a { height: 30.600px; }
.board { width: 805px; padding-left: 23px; }
.card { background: #fff; border-radius: 2px; box-shadow: 0 0 3px rgba(70,60,90,.13), 0 2px 9px rgba(150,120,160,.08); }
.charts { display: flex; gap: 17px; width: 765px; }
.charts .card { width: 374px; height: 49px; }
.chart svg { width: 374px; height: 50px; }
.chart text { font-size: 9.200px; fill: #777; }
.totals { width: 765px; margin-top: 18px; height: 220px; }
.totals h5 { margin: 0; padding-left: 11px; height: 34.500px; line-height: 34px; font-size: 9.700px; font-weight: 500; color: #2c2f33; border-bottom: 1px solid #eaeef1; }
.cbody { height: 190px; padding: 11.500px 11px; background: linear-gradient(#f3fafe, #f8fcfe); }
.show { display: flex; justify-content: flex-end; align-items: center; gap: 3px; height: 25px; font-size: 9.100px; color: #6c7278; margin-bottom: 15px; }
.show > span:not(.select) { margin-top: -1px; }
.select { width: 47px; height: 26px; background: #fff; border: 1px solid #e7eaed; border-radius: 3px; display: flex; align-items: center; padding-left: 10px; color: #4b5157; }
.select svg { width: 6px; height: 8px; margin-left: 10px; }
.table { width: 737px; border: 1px solid #e9ebee; border-right-width: 1px; }
.row { display: grid; grid-template-columns: 264px 96px 135.700px 121px 118.300px; height: 30.600px; border-bottom: 1px solid #e6e9ec; }
.row > * { padding-left: 8px; border-right: 1px solid #e8ebee; font-size: 9.100px; font-weight: 500; color: #3c4249; display: flex; align-items: center; white-space: nowrap; letter-spacing: .01px; }
.row > :last-child { border-right: 0; }
.row > b { color: #24272b; font-weight: 600; }
.row > b:first-child { background: #f3f6fd; }
.odd { background: #f5f9fb; } .odd > b:first-child { background: #eef1f9; }
.head { height: 32px; border-bottom: 2px solid #e4e7ea; }
.head svg { width: 12px; height: 10px; margin: 0 4px 0 auto; }
.p2 .totals { margin-top: 0; height: 236px; padding: 0 11px; background: linear-gradient(#f8fdfe, #fff 45%); }
.p2 .table { border-top: 0; }
.p2 .row { height: 30.500px; }
.p2 .row > b:first-child { background: #f8f8fd; }
.p2 .odd { background: #f9fafb; } .p2 .odd > b:first-child { background: #f3f4f9; }
.p2 .row.stub { height: 8px; }
.p2 .row > * { padding-top: .5px; }
.foot { display: flex; justify-content: space-between; align-items: center; height: 44px; padding-top: 4px; font-size: 9.200px; color: #62676c; width: 742.500px; }
.pager { display: flex; gap: 4px; margin-top: -5px; }
.pager i { width: 20.300px; height: 20.500px; background: #ededed; border-radius: 2.500px; display: flex; align-items: center; justify-content: center; font-style: normal; font-weight: 500; }
.pager .sel { background: #8968b3; color: #fff; }
.pager svg { width: 6px; height: 10px; }
.next { margin-top: 19px; }
.scroll { width: 17px; background: #f1f1f1; display: flex; flex-direction: column; align-items: center; padding: 7px 0; flex: none; }
.scroll svg { width: 8px; height: 4px; }
.scroll i { width: 13px; height: 136px; background: #c1c1c1; margin-top: 115px; }
.scroll .dn { margin-top: auto; }

/* taskbar */
.taskbar { height: 40px; flex: none; display: flex; background: linear-gradient(90deg, #20363d 0, #20363d 45%, #1c2941 80%, #19233f); color: #fff; }
.start { width: 48px; display: flex; align-items: center; justify-content: center; }
.start svg { width: 16px; height: 16px; }
.search { width: 344px; background: #f2f2f2; border: 1px solid #c3c3c3; display: flex; align-items: center; color: #333; font-size: 14.500px; padding-left: 11px; }
.mag { width: 18px; height: 18px; }
.search span { margin-left: 10px; white-space: nowrap; letter-spacing: -.3px; }
.lemur { width: 80px; height: 38px; margin-left: auto; }
.apps { display: flex; }
.app { width: 49px; display: flex; align-items: center; justify-content: center; position: relative; }
.app svg { width: 24px; height: 24px; } .app .s16 { width: 16px; height: 16px; }
.tv { width: 50px; padding-right: 2px; }
.run::after { content: ""; position: absolute; left: 4px; right: 4px; bottom: 0; height: 2px; background: #76b9ed; }
.cur { background: #4d6067; } .cur::after { left: 0; right: 0; }
.rar::after { right: 3px; background: linear-gradient(90deg, #76b9ed 34px, #527f9f 34px); }
.ps { width: 21px; height: 21px; background: #001e36; color: #31a8ff; border-radius: 4px; font: bold 12px/20px "Open Sans", sans-serif; letter-spacing: -.3px; text-align: center; }
.tray { display: flex; align-items: center; margin-left: auto; font-size: 12px; }
.t1 { width: 12px; height: 8px; } .t2 { width: 16px; height: 10px; margin-left: 12px; } .t3 { width: 17px; height: 14px; margin-left: 7px; } .t4 { width: 14px; height: 14px; margin-left: 9px; }
.lang, .clock { display: flex; flex-direction: column; align-items: center; line-height: 17px; letter-spacing: -.4px; padding-bottom: 1px; white-space: nowrap; }
.lang { width: 32px; margin-left: 5px; } .clock { width: 70px; margin-left: 3px; }
.notif { position: relative; width: 17px; margin: 0 24px 0 12px; }
.notif svg { width: 17px; height: 16px; }
.notif b { position: absolute; left: 7px; top: 6px; width: 16px; height: 16px; border-radius: 8px; background: #39424c; border: 1px solid #8c939b; font: 11px/13px "Open Sans", sans-serif; text-align: center; }
```
